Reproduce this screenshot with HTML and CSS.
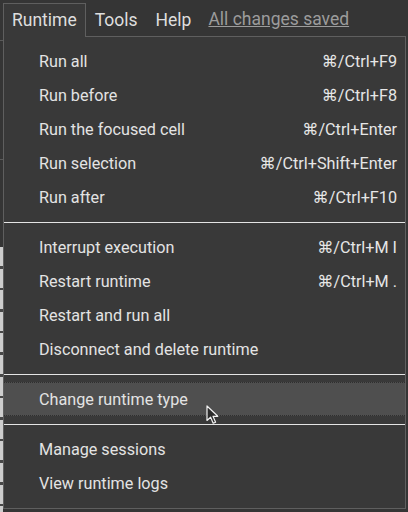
FILE: index.html
```html
<!DOCTYPE html>
<html>
    <head>
        <link rel="stylesheet" href="styles.css">
    </head>
    <body>
        <nav class="menubar">
            <span class="tab active">Runtime</span>
            <span class="tab">Tools</span>
            <span class="tab">Help</span>
            <a class="saved" href="#">All changes saved</a>
        </nav>

        <div class="workspace">
            <div class="gutter-top"></div>
            <div class="gutter"></div>
        </div>

        <div class="dropdown">
            <div class="section">
                <div class="item"><span>Run all</span><span class="keys">⌘/Ctrl+F9</span></div>
                <div class="item"><span>Run before</span><span class="keys">⌘/Ctrl+F8</span></div>
                <div class="item"><span>Run the focused cell</span><span class="keys">⌘/Ctrl+Enter</span></div>
                <div class="item"><span>Run selection</span><span class="keys">⌘/Ctrl+Shift+Enter</span></div>
                <div class="item"><span>Run after</span><span class="keys">⌘/Ctrl+F10</span></div>
            </div>
            <div class="section">
                <div class="item"><span>Interrupt execution</span><span class="keys">⌘/Ctrl+M I</span></div>
                <div class="item"><span>Restart runtime</span><span class="keys">⌘/Ctrl+M .</span></div>
                <div class="item"><span>Restart and run all</span></div>
                <div class="item"><span>Disconnect and delete runtime</span></div>
            </div>
            <div class="section">
                <div class="item hover"><span>Change runtime type</span></div>
            </div>
            <div class="section">
                <div class="item"><span>Manage sessions</span></div>
                <div class="item"><span>View runtime logs</span></div>
            </div>
        </div>

        <!-- mouse pointer over the highlighted row -->
        <svg class="cursor" width="14" height="20" viewBox="0 0 14 20">
            <path d="M1 1 L1 15.5 L4.6 12.2 L7.2 18.2 L9.6 17.2 L7 11.3 L11.8 11.3 Z" fill="#2c2c2c" stroke="#f2f2f2" stroke-width="1.2" stroke-linejoin="round"/>
        </svg>
    </body>
</html>
```

FILE: styles.css
```css
* {
    margin: 0;
    padding: 0;
    box-sizing: border-box;
}

body {
    width: 408px;
    height: 512px;
    overflow: hidden;
    position: relative;
    background-color: #353535;
    font-family: Roboto, "Noto Sans", "DejaVu Sans", sans-serif;
    color: #e2e2e2;
}

.menubar {
    height: 36px;
    padding-left: 3px;
    display: flex;
    flex-direction: row;
    align-items: flex-end;
}

.tab {
    height: 34px;
    margin-bottom: -1px;
    padding: 0 8px;
    border: 1px solid transparent;
    border-bottom: 0;
    font-size: 17.5px;
    line-height: 33px;
    color: #dedede;
}

.tab.active {
    position: relative;
    z-index: 3;
    background-color: #393939;
    border-color: #5f5f5f;
}

.saved {
    height: 34px;
    margin-bottom: -1px;
    margin-left: 8px;
    font-size: 17.5px;
    line-height: 33px;
    color: #9c9c9c;
    text-decoration: underline;
}

.workspace {
    height: 476px;
    display: flex;
    flex-direction: column;
}

.gutter-top {
    width: 3px;
    height: 120px;
    margin-top: 4px;
    border-top: 1px solid #5a5a5a;
    border-bottom: 1px solid #5a5a5a;
}

.gutter {
    width: 3px;
    height: 265px;
    margin-top: 87px;
    background: repeating-linear-gradient(to bottom, #cdcdcd 0 19px, #474747 19px 21.6px);
}

.dropdown {
    position: absolute;
    z-index: 2;
    left: 3px;
    top: 36px;
    width: 403px;
    height: 473px;
    background-color: #393939;
    border: 1px solid #5f5f5f;
}

.section {
    padding: 7px 0 8px;
}

.section + .section {
    border-top: 1px solid #e4e4e4;
}

.item {
    height: 34px;
    padding: 0 8px 0 35px;
    display: flex;
    justify-content: space-between;
    align-items: center;
    font-size: 16.2px;
    color: #e3e3e3;
}

.keys {
    color: #e6e6e6;
}

.item.hover {
    background-color: #4f4f4f;
    border-top: 1px dotted #2f2f2f;
    border-bottom: 1px dotted #2f2f2f;
}

.cursor {
    position: absolute;
    z-index: 4;
    left: 206px;
    top: 405px;
}
```
